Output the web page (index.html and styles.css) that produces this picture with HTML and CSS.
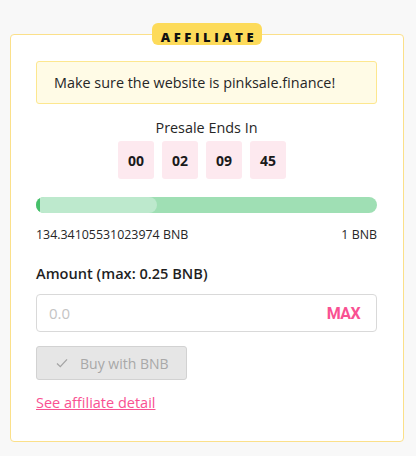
FILE: index.html
```html
<!DOCTYPE html>
<html>
<head>
<meta charset="utf-8">
<link rel="stylesheet" href="styles.css">
</head>
<body>
<div class="page">
  <div class="card">
    <div class="badge">AFFILIATE</div>
    <div class="alert">Make sure the website is pinksale.finance!</div>
    <div class="timer">
      <div class="timer-title">Presale Ends In</div>
      <div class="boxes">
        <div class="box">00</div>
        <div class="box">02</div>
        <div class="box">09</div>
        <div class="box">45</div>
      </div>
    </div>
    <div class="progress">
      <div class="glow"></div>
      <div class="fill"></div>
    </div>
    <div class="range">
      <span>134.34105531023974 BNB</span>
      <span>1 BNB</span>
    </div>
    <div class="label">Amount (max: 0.25 BNB)</div>
    <div class="input">
      <span class="placeholder">0.0</span>
      <span class="max">MAX</span>
    </div>
    <button class="buy" disabled>
      <svg width="12" height="12" viewBox="0 0 12 12"><path d="M1 6.5 L4.3 9.6 L11 2.4" fill="none" stroke="#a4a4a4" stroke-width="1.3"/></svg>
      <span>Buy with BNB</span>
    </button>
    <a class="link" href="#">See affiliate detail</a>
  </div>
</div>
</body>
</html>
```
FILE: styles.css
```css
* { box-sizing: border-box; }
html, body { margin: 0; padding: 0; }
body {
  background: #f8f8f8;
  font-family: "Open Sans", "Noto Sans", sans-serif;
  color: #262626;
  width: 416px;
  height: 456px;
  overflow: hidden;
}
.page {
  padding: 34px 12px 0 10px;
}
.card {
  position: relative;
  background: #fff;
  border: 1px solid #fbe08a;
  border-radius: 4px;
  padding: 26px 26px 28px 25px;
  display: flex;
  flex-direction: column;
}
.badge {
  position: absolute;
  top: -12px;
  left: 141px;
  width: 110px;
  height: 22px;
  background: #fddb5a;
  border-radius: 6px;
  font-weight: 800;
  font-size: 13px;
  letter-spacing: 3.6px;
  text-align: center;
  line-height: 29px;
  color: #111;
  padding-left: 4px;
}
.alert {
  background: #fffbe6;
  border: 1px solid #fde78f;
  border-radius: 3px;
  height: 43px;
  padding: 0 17px;
  display: flex;
  align-items: center;
  font-size: 14.4px;
  color: #262626;
}
.timer {
  margin-top: 14px;
  display: flex;
  flex-direction: column;
  align-items: center;
}
.timer-title {
  font-size: 14.4px;
  line-height: 20px;
  color: #262626;
}
.boxes {
  display: flex;
  gap: 8px;
  margin-top: 3px;
  padding-right: 9px;
}
.box {
  width: 36px;
  height: 38px;
  background: #fde9ef;
  border-radius: 3px;
  display: flex;
  align-items: center;
  justify-content: center;
  font-weight: 700;
  font-size: 14px;
  color: #1a1a1a;
}
.progress {
  position: relative;
  margin-top: 18px;
  height: 16px;
  border-radius: 8px;
  background: #9fdfb4;
  overflow: hidden;
}
.glow {
  position: absolute;
  left: 0;
  top: 0;
  width: 121px;
  height: 16px;
  border-radius: 8px;
  background: #bde9cd;
}
.fill {
  position: absolute;
  left: 0;
  top: 0;
  width: 4px;
  height: 16px;
  background: #46c06a;
  border-radius: 8px 0 0 8px;
}
.range {
  display: flex;
  justify-content: space-between;
  font-size: 12.4px;
  line-height: 16px;
  margin-top: 14px;
  color: #262626;
}
.label {
  margin-top: 20px;
  font-size: 14.6px;
  font-weight: 600;
  line-height: 20px;
  color: #1f1f1f;
}
.input {
  margin-top: 11px;
  height: 38px;
  border: 1px solid #d9d9d9;
  border-radius: 4px;
  display: flex;
  align-items: center;
  justify-content: space-between;
  padding: 0 16px 0 12px;
}
.placeholder {
  font-size: 15px;
  color: #c4c4c4;
}
.max {
  font-family: Roboto, "Open Sans", sans-serif;
  font-size: 16px;
  font-weight: 700;
  letter-spacing: -0.6px;
  color: #f95192;
}
.buy {
  margin-top: 14px;
  align-self: flex-start;
  width: 151px;
  height: 34px;
  background: #e6e6e6;
  border: 1px solid #d2d2d2;
  border-radius: 3px;
  display: flex;
  align-items: center;
  gap: 12px;
  padding: 0 0 0 19px;
  font-family: inherit;
  font-size: 14px;
  color: #a8a8a8;
}
.link {
  margin-top: 13px;
  align-self: flex-start;
  font-size: 14.5px;
  color: #f95192;
  text-decoration: underline;
  line-height: 20px;
}
```
